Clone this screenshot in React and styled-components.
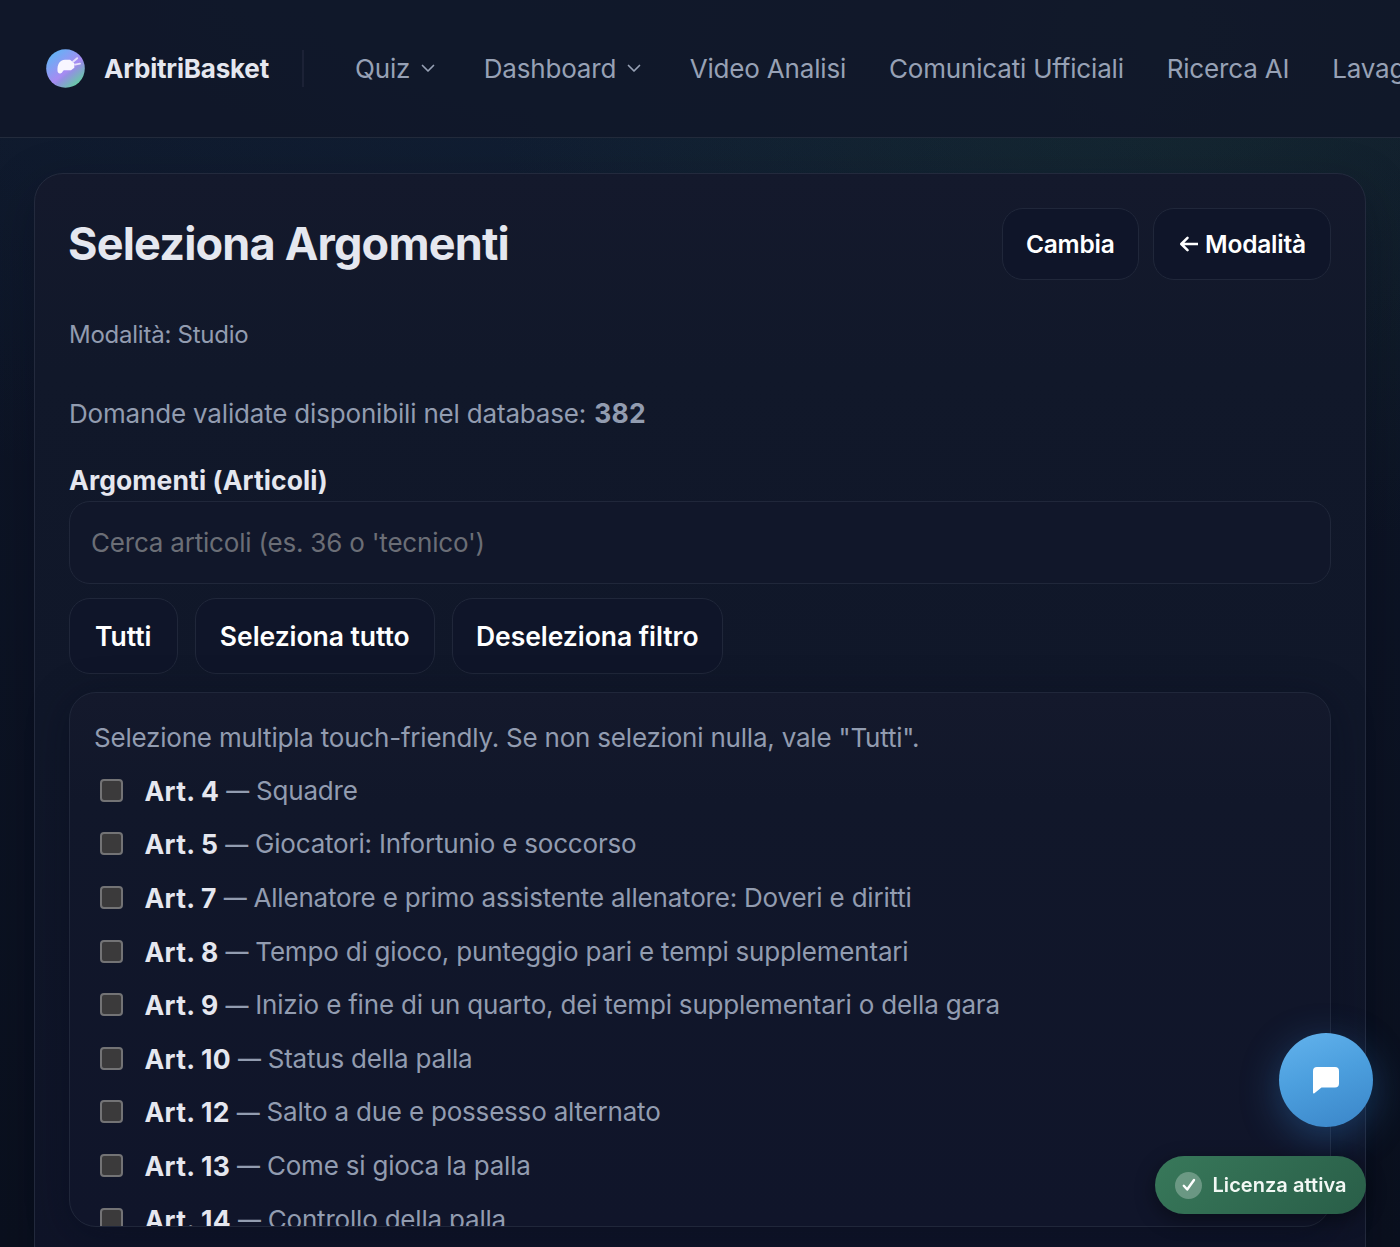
import React from "react";
import styled, { createGlobalStyle } from "styled-components";

const articles = [
  { number: 4, title: "Squadre" },
  { number: 5, title: "Giocatori: Infortunio e soccorso" },
  { number: 7, title: "Allenatore e primo assistente allenatore: Doveri e diritti" },
  { number: 8, title: "Tempo di gioco, punteggio pari e tempi supplementari" },
  { number: 9, title: "Inizio e fine di un quarto, dei tempi supplementari o della gara" },
  { number: 10, title: "Status della palla" },
  { number: 12, title: "Salto a due e possesso alternato" },
  { number: 13, title: "Come si gioca la palla" },
  { number: 14, title: "Controllo della palla" },
];

const links = [
  { label: "Quiz", menu: true },
  { label: "Dashboard", menu: true },
  { label: "Video Analisi" },
  { label: "Comunicati Ufficiali" },
  { label: "Ricerca AI" },
  { label: "Lavagna" },
];

const GlobalStyle = createGlobalStyle`
  *,
  *::before,
  *::after {
    box-sizing: border-box;
  }

  body {
    margin: 0;
    background: #0a101c;
    color: #e5e7ef;
    font-family: Inter, "Liberation Sans", sans-serif;
    font-size: 26px;
    letter-spacing: -0.2px;
  }

  h1,
  p {
    margin: 0;
  }
`;

const Page = styled.div`
  display: flex;
  flex-direction: column;
  height: 1247px;
  overflow: hidden;
  background:
    radial-gradient(700px 520px at 1180px 40px, rgba(40, 88, 66, 0.24), transparent),
    radial-gradient(1100px 560px at 560px -20px, rgba(34, 74, 104, 0.22), transparent),
    linear-gradient(180deg, #0e1629, #0a101e);
`;

const Header = styled.header`
  display: flex;
  flex: none;
  align-items: center;
  height: 138px;
  padding: 0 0 0 46px;
  overflow: hidden;
  white-space: nowrap;
  background: rgba(17, 23, 41, 0.9);
  border-bottom: 1px solid #232b3c;
`;

const Brand = styled.div`
  display: flex;
  flex: none;
  align-items: center;
  gap: 19px;
  width: 258px;
  height: 37px;
  border-right: 2px solid #1c2236;
  font-weight: 700;
  letter-spacing: -0.2px;
`;

const Nav = styled.nav`
  display: flex;
  align-items: center;
  gap: 42px;
  padding-left: 51px;
`;

const NavLink = styled.a`
  display: flex;
  flex: none;
  align-items: center;
  gap: 11px;
  padding-right: ${(props) => (props.$menu ? 6.5 : 0.9)}px;
  color: #97a1b5;
  letter-spacing: -0.18px;
  line-height: 32px;
`;

const Card = styled.main`
  display: flex;
  flex-direction: column;
  flex: none;
  height: 1200px;
  margin: 35px 34px 0;
  padding: 34px 34px 0;
  border: 1px solid #232a3d;
  border-radius: 29px;
  background: linear-gradient(180deg, #14192c 0, #11182a 200px, #101729 560px, #0f1428 1100px);
  box-shadow: 0 16px 50px rgba(4, 8, 22, 0.26);
`;

const TitleRow = styled.div`
  display: flex;
  align-items: center;
  justify-content: space-between;
  height: 72px;
`;

const Title = styled.h1`
  margin: -2px 0 0 -1px;
  font-size: 45px;
  font-weight: 700;
  letter-spacing: -0.8px;
`;

const Actions = styled.div`
  display: flex;
  gap: ${(props) => props.$gap || 14}px;
`;

const Button = styled.button`
  display: flex;
  align-items: center;
  justify-content: center;
  gap: 7px;
  width: ${(props) => props.$width}px;
  height: ${(props) => (props.$large ? 76 : 72)}px;
  padding: 0;
  border: 1px solid #20273a;
  border-radius: 21px;
  background: #0f1529;
  color: #fff;
  font: inherit;
  font-size: ${(props) => (props.$large ? 26.5 : 24.5)}px;
  font-weight: 600;
  letter-spacing: ${(props) => (props.$large ? -0.05 : -0.2)}px;
`;

const Mode = styled.p`
  margin-top: 40px;
  color: #929cb0;
  font-size: 24px;
  letter-spacing: -0.24px;
  line-height: 30px;
`;

const Available = styled.p`
  height: 32px;
  margin-top: 47px;
  color: #929cb0;
  letter-spacing: -0.18px;
  line-height: 32px;

  strong {
    margin-left: 1px;
    font-size: 26.5px;
    letter-spacing: 0.15px;
  }
`;

const Label = styled.label`
  margin-top: 34px;
  font-size: 26.5px;
  font-weight: 700;
  letter-spacing: 0.1px;
  line-height: 34px;
`;

const SearchInput = styled.input`
  height: 83px;
  margin-top: 4px;
  margin-bottom: 14px;
  padding: 0 21px;
  border: 1px solid #20273a;
  border-radius: 21px;
  outline: none;
  background: #11172a;
  color: inherit;
  font: inherit;
  letter-spacing: inherit;

  &::placeholder {
    color: #6b6e76;
  }
`;

const List = styled.section`
  flex: none;
  height: 535px;
  margin-top: 18px;
  padding: 28px 24px 0;
  overflow: hidden;
  border: 1px solid #20273a;
  border-radius: 27px;
  background: linear-gradient(180deg, #14192c 0, #11172a 110px, #10152a 100%);
  box-shadow: 0 8px 40px rgba(6, 10, 28, 0.4);
`;

const Hint = styled.p`
  margin-bottom: 9px;
  color: #929cb0;
  letter-spacing: -0.21px;
  line-height: 34px;
`;

const Article = styled.label`
  display: flex;
  align-items: center;
  height: 53.6px;
  padding-left: 6px;
  color: #929cb0;
  line-height: 32px;
  white-space: pre;
`;

const Checkbox = styled.input`
  appearance: none;
  width: 23px;
  height: 23px;
  margin: 0 21.5px 1px 0;
  border: 2px solid #737375;
  border-radius: 4px;
  background: #3b3a3b;
`;

const Number = styled.strong`
  color: #e5e7ef;
  font-size: 26.5px;
  letter-spacing: 0.28px;
`;

const Dash = styled.span`
  margin: 1px 7px 0 7px;
  font-size: 23px;
  font-weight: 500;
`;

const ChatButton = styled.button`
  position: fixed;
  top: 1033px;
  left: 1279px;
  display: flex;
  align-items: center;
  justify-content: center;
  width: 94px;
  height: 94px;
  padding: 0;
  border: 0;
  border-radius: 50%;
  background: linear-gradient(160deg, #63b3ed 0%, #4c9fde 45%, #3a85c8 100%);
  box-shadow: 0 10px 38px rgba(49, 130, 206, 0.38);
`;

const License = styled.div`
  position: fixed;
  top: 1156px;
  left: 1155px;
  display: flex;
  align-items: center;
  gap: 10.5px;
  width: 211px;
  height: 58px;
  padding-left: 20px;
  border-radius: 29px;
  background: linear-gradient(135deg, #38785a, #295e48);
  box-shadow: 0 6px 20px rgba(0, 0, 0, 0.4);
  color: #f2f8f4;
  font-size: 20px;
  font-weight: 600;
  letter-spacing: 0.05px;
`;

const CheckBadge = styled.span`
  display: flex;
  align-items: center;
  justify-content: center;
  width: 27px;
  height: 27px;
  border-radius: 50%;
  background: rgba(255, 255, 255, 0.27);
`;

const Logo = () => (
  <svg width="39" height="39" viewBox="0 0 39 39">
    <defs>
      <linearGradient id="logo" x1="0.15" y1="0.1" x2="0.85" y2="0.95">
        <stop offset="0" stopColor="#63b3f5" />
        <stop offset="0.55" stopColor="#a78bf2" />
        <stop offset="0.63" stopColor="#9391e2" />
        <stop offset="1" stopColor="#5fd49b" />
      </linearGradient>
    </defs>
    <circle cx="19.5" cy="19.5" r="19.3" fill="url(#logo)" />
    <path
      d="M11.5 22C11 15.5 13.500 11 19 10.700h5l4.300 3.500v4.600l-3.300 2.500h-7.200c-1.200.7-1.200 2.500-2.900 3-1.900.6-3.100-.3-3.400-2.300Z"
      fill="#f8f6ff"
    />
    <path d="m27 12.700 4.200-3.500M29 15.600l5-1" stroke="#e6e0fb" strokeWidth="1.900" strokeLinecap="round" />
  </svg>
);

const Chevron = () => (
  <svg width="14" height="9" viewBox="0 0 14 9" fill="none">
    <path d="m1.500 1.500 5.500 5.500 5.500-5.500" stroke="#97a1b5" strokeWidth="1.700" strokeLinecap="round" strokeLinejoin="round" />
  </svg>
);

const ArrowLeft = () => (
  <svg width="20" height="20" viewBox="0 0 20 20" fill="none">
    <path d="M19.500 10H3.500M9.500 3.800 3.300 10l6.200 6.200" stroke="#fff" strokeWidth="2.500" strokeLinecap="round" strokeLinejoin="round" />
  </svg>
);

const App = () => {
  return (
    <Page>
      <GlobalStyle />
      <Header>
        <Brand>
          <Logo />
          ArbitriBasket
        </Brand>
        <Nav>
          {links.map((link) => (
            <NavLink key={link.label} $menu={link.menu}>
              {link.label}
              {link.menu && <Chevron />}
            </NavLink>
          ))}
        </Nav>
      </Header>
      <Card>
        <TitleRow>
          <Title>Seleziona Argomenti</Title>
          <Actions>
            <Button $width={137.5}>Cambia</Button>
            <Button $width={178}>
              <ArrowLeft />
              Modalità
            </Button>
          </Actions>
        </TitleRow>
        <Mode>Modalità: Studio</Mode>
        <Available>
          Domande validate disponibili nel database: <strong>382</strong>
        </Available>
        <Label htmlFor="search">Argomenti (Articoli)</Label>
        <SearchInput id="search" placeholder="Cerca articoli (es. 36 o 'tecnico')" />
        <Actions $gap={17}>
          <Button $large $width={108.5}>Tutti</Button>
          <Button $large $width={240.5}>Seleziona tutto</Button>
          <Button $large $width={270.5}>Deseleziona filtro</Button>
        </Actions>
        <List>
          <Hint>Selezione multipla touch-friendly. Se non selezioni nulla, vale "Tutti".</Hint>
          {articles.map((article) => (
            <Article key={article.number}>
              <Checkbox type="checkbox" />
              <Number>Art. {article.number}</Number>
              <Dash>—</Dash>
              {article.title}
            </Article>
          ))}
        </List>
      </Card>
      <ChatButton aria-label="Chat">
        <svg width="28" height="28" viewBox="0 0 28 28">
          <path d="M5 1h18a4 4 0 0 1 4 4v12.500a4 4 0 0 1-4 4H9.500L2.400 27.200Q1 28 1 26.200V5a4 4 0 0 1 4-4Z" fill="#fff" />
        </svg>
      </ChatButton>
      <License>
        <CheckBadge>
          <svg width="14" height="14" viewBox="0 0 14 14" fill="none">
            <path d="m1.800 7.800 3.400 3.700L12 2" stroke="#fff" strokeWidth="2.400" strokeLinecap="round" strokeLinejoin="round" />
          </svg>
        </CheckBadge>
        Licenza attiva
      </License>
    </Page>
  );
};

export default App;
